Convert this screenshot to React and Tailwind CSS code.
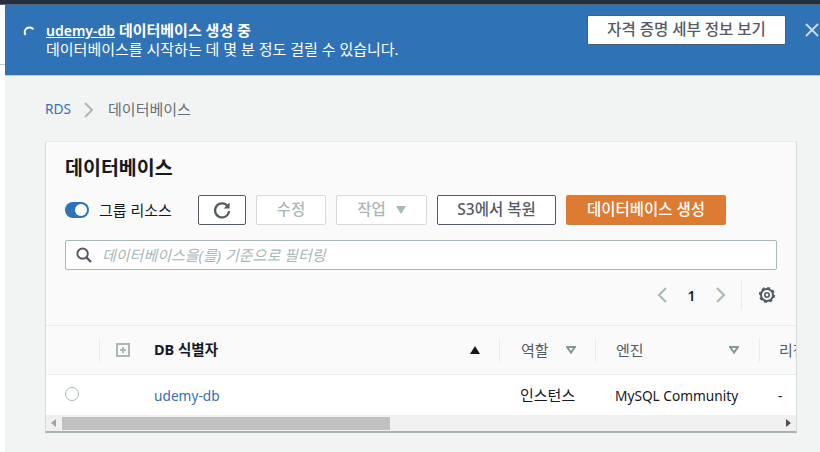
import { X } from 'lucide-react'

const font = "font-['Noto_Sans','Noto_Sans_CJK_KR',sans-serif]"

const Caret = ({ className }) => (
  <svg width="10" height="8" viewBox="0 0 10 8" className={className}>
    <path d="M0 0h10L5 8z" fill="currentColor" />
  </svg>
)

const FilterCaret = () => (
  <svg width="10" height="8" viewBox="0 0 10 8" className="text-[#879596] shrink-0">
    <path d="M1 1h8L5 6.6z" fill="none" stroke="currentColor" strokeWidth="2" />
  </svg>
)

// chevrons in the pager and breadcrumb are wider than lucide's
const Chevron = ({ left, className }) => (
  <svg width="10" height="16" viewBox="0 0 10 16" className={className}>
    <path d={left ? 'M9 1L2 8l7 7' : 'M1 1l7 7-7 7'} fill="none" stroke="currentColor" strokeWidth="2" />
  </svg>
)

const Banner = () => (
  <div className="flex h-[71px] bg-[#3072b6] text-white border-b border-[#c4c8c8]">
    <div className="w-[41px] pt-[20px] pl-[18px] shrink-0">
      <svg width="12" height="12" viewBox="0 0 12 12">
        <path d="M2.6 10A4.6 4.6 0 1 1 10.4 4.4" fill="none" stroke="white" strokeWidth="2" />
      </svg>
    </div>
    <div className="pt-[16px] text-[15px] leading-[19px] flex-1">
      <div className="font-semibold">
        <span className="underline text-[14px]">udemy-db</span> 데이터베이스 생성 중
      </div>
      <div>데이터베이스를 시작하는 데 몇 분 정도 걸릴 수 있습니다.</div>
    </div>
    <button className="mt-[10px] w-[199px] h-[30px] bg-white border border-[#545b64] rounded-[2px] text-[#545b64] text-[15.5px] font-medium">
      자격 증명 세부 정보 보기
    </button>
    <div className="w-[34px] pt-[14px] pl-[15px] shrink-0">
      <X size={22} strokeWidth={2} className="text-[#d5dbdb]" />
    </div>
  </div>
)

const Toolbar = () => (
  <div className="flex items-center mt-[14px] h-[30px]">
    <span className="w-[24px] h-[16px] rounded-full bg-[#2f72b8] flex items-center justify-end pr-[2px]">
      <span className="w-[12px] h-[12px] rounded-full bg-white"></span>
    </span>
    <span className="ml-[10px] w-[74px] text-[15px] whitespace-nowrap text-[#16191f]">그룹 리소스</span>
    <button className="ml-[25px] w-[48px] h-[30px] bg-white border border-[#545b64] rounded-[2px] flex items-center justify-center">
      <svg width="20" height="20" viewBox="0 0 20 20" className="text-[#545b64]">
        <path d="M15.6 6.2A7 7 0 1 0 17 11" fill="none" stroke="currentColor" strokeWidth="2.2" />
        <path d="M17.6 2.4v6h-6z" fill="currentColor" />
      </svg>
    </button>
    <button className="ml-[10px] w-[70px] h-[30px] bg-white border border-[#d5dbdb] rounded-[2px] text-[15.5px] font-medium text-[#aab7b8]">
      수정
    </button>
    <button className="ml-[10px] w-[91px] h-[30px] bg-white border border-[#d5dbdb] rounded-[2px] text-[15.5px] font-medium text-[#aab7b8] flex items-center justify-center gap-[10px]">
      작업 <Caret className="text-[#aab7b8]" />
    </button>
    <button className="ml-[10px] w-[119px] h-[30px] bg-white border border-[#545b64] rounded-[2px] text-[15.5px] font-medium text-[#545b64]">
      S3에서 복원
    </button>
    <button className="ml-[10px] w-[160px] h-[30px] bg-[#de7b32] rounded-[2px] text-[15.5px] font-medium text-white">
      데이터베이스 생성
    </button>
  </div>
)

const HeaderCell = ({ width, children, className }) => (
  <div className={`h-full flex items-center shrink-0 ${width} ${className}`}>{children}</div>
)

const Divider = () => <div className="w-[1px] h-[24px] bg-[#eaeded] shrink-0"></div>

const Table = () => (
  <div className="mt-[15px] border-t border-[#eaeded] overflow-hidden">
    <div className="h-[49px] flex items-center border-b border-[#eaeded] w-[900px]">
      <HeaderCell width="w-[53px]" />
      <Divider />
      <HeaderCell width="w-[54px]" className="pl-[16px]">
        <svg width="14" height="14" viewBox="0 0 14 14" className="text-[#aab7b8]">
          <path d="M0 0h14v14H0zM2 2v10h10V2zM6 4h2v2h2v2H8v2H6V8H4V6h2z" fill="currentColor" fillRule="evenodd" />
        </svg>
      </HeaderCell>
      <HeaderCell width="w-[345px]" className="justify-between pr-[19px] font-bold text-[14.5px] text-[#16191f]">
        <span>DB 식별자</span>
        <Caret className="text-[#16191f] rotate-180" />
      </HeaderCell>
      <Divider />
      <HeaderCell width="w-[95px]" className="pl-[21px] text-[15px] text-[#545b64]">
        <span className="w-[45px]">역할</span>
        <FilterCaret />
      </HeaderCell>
      <Divider />
      <HeaderCell width="w-[163px]" className="justify-between pl-[20px] pr-[20px] text-[15px] text-[#545b64]">
        <span>엔진</span>
        <FilterCaret />
      </HeaderCell>
      <Divider />
      <HeaderCell width="w-[100px]" className="pl-[19px] text-[15px] text-[#545b64]">리전</HeaderCell>
    </div>
    <div className="h-[40px] flex items-center bg-white w-[900px] text-[13.7px] text-[#16191f]">
      <div className="w-[108px] pl-[19px] shrink-0">
        <span className="block mb-[2px] w-[14px] h-[14px] rounded-full border border-[#aab7b8] bg-white"></span>
      </div>
      <div className="w-[366px] mt-[2px] shrink-0 text-[#3a6fb5]">udemy-db</div>
      <div className="w-[95px] shrink-0 text-[15px] whitespace-nowrap">인스턴스</div>
      <div className="w-[163px] mt-[2px] shrink-0 whitespace-nowrap">MySQL Community</div>
      <div className="mt-[2px]">-</div>
    </div>
    <div className="h-[16px] bg-[#f0f0f0] flex items-center justify-between pl-[5px] pr-[5px]">
      <div className="flex items-center">
        <svg width="5" height="8" viewBox="0 0 5 8" className="text-[#a3a3a3]">
          <path d="M5 0v8L0 4z" fill="currentColor" />
        </svg>
        <div className="ml-[6px] mt-[1px] w-[328px] h-[13px] bg-[#c1c1c1]"></div>
      </div>
      <svg width="5" height="8" viewBox="0 0 5 8" className="text-[#505050]">
        <path d="M0 0v8l5-4z" fill="currentColor" />
      </svg>
    </div>
  </div>
)

const App = () => (
  <div className={`w-[820px] h-[452px] overflow-hidden bg-[#f2f3f3] ${font}`}>
    <div className="h-[5px] bg-[#232f3e] border-b border-[#5a6470]"></div>
    <div className="flex">
      <div className="w-[5px] h-[447px] bg-white shrink-0">
        <div className="h-[60px] border-b border-[#c4c8c8]"></div>
      </div>
      <div className="w-[815px]">
        <Banner />
        <div className="flex items-center h-[65px] pl-[40px] pt-[2px] text-[15px]">
          <span className="text-[13.7px] text-[#3a6fb5]">RDS</span>
          <Chevron className="text-[#aab7b8] ml-[13px] mr-[14px]" />
          <span className="text-[#687078]">데이터베이스</span>
        </div>
        <div className="ml-[40px] w-[752px] h-[292px] bg-[#fafafa] border-x border-[#d5dbdb] border-b-2 border-b-[#a9b2b3] border-t border-t-[#eaeded]">
          <div className="pl-[19px] pr-[19px] pt-[13px]">
            <h1 className="text-[19.5px] leading-[26px] font-semibold text-[#16191f]">데이터베이스</h1>
            <Toolbar />
            <div className="mt-[15px] h-[30px] w-[712px] bg-white border border-[#aab7b8] rounded-[2px] flex items-center pl-[10px]">
              <svg width="16" height="16" viewBox="0 0 16 16" className="text-[#545b64] shrink-0">
                <circle cx="6.6" cy="6.6" r="5.2" fill="none" stroke="currentColor" strokeWidth="2" />
                <path d="M10.4 10.4L15 15" fill="none" stroke="currentColor" strokeWidth="2.4" />
              </svg>
              <span className="ml-[10px] text-[15px] italic text-[#aab7b8]">데이터베이스을(를) 기준으로 필터링</span>
            </div>
            <div className="mt-[10px] h-[30px] flex items-center justify-end">
              <Chevron left className="text-[#aab7b8]" />
              <span className="w-[49px] text-center text-[14px] font-semibold text-[#16191f]">1</span>
              <Chevron className="text-[#aab7b8]" />
              <div className="w-[1px] h-[30px] bg-[#eaeded] ml-[15px] mr-[15px]"></div>
              <svg width="20" height="20" viewBox="0 0 20 20" className="text-[#545b64]">
                <circle cx="10" cy="10" r="6" fill="none" stroke="currentColor" strokeWidth="2" />
                <circle cx="10" cy="10" r="7.2" fill="none" stroke="currentColor" strokeWidth="1.8" strokeDasharray="3 2.65" />
                <circle cx="10" cy="10" r="2.2" fill="none" stroke="currentColor" strokeWidth="1.6" />
              </svg>
            </div>
          </div>
          <Table />
        </div>
      </div>
    </div>
  </div>
)

export default App
